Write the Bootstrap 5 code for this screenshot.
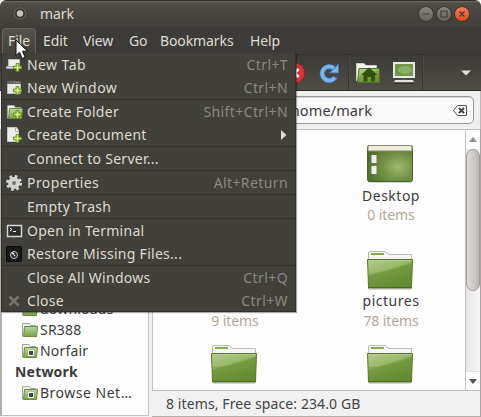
<!DOCTYPE html>
<html lang="en">
<head>
<meta charset="utf-8">
<meta name="viewport" content="width=device-width, initial-scale=1">
<title>mark</title>
<link href="https://cdn.jsdelivr.net/npm/bootstrap@5.3.0/dist/css/bootstrap.min.css" rel="stylesheet">
<style>
body{width:481px;height:417px;overflow:hidden;background:#3c3b37;font-family:"Noto Sans","Open Sans",sans-serif;font-size:14px;line-height:20px;color:#3c3c3c;letter-spacing:-.1px}
.win{width:481px;height:417px;border-radius:6px 6px 0 0;background:#f0f1f0}
.backing{background:#fff}
.titlebar{height:27px;background:linear-gradient(#2f2e2b 0,#2f2e2b 1px,#65635b 1px,#65635b 2px,#4d4b44 3px,#403f3a);color:#dfdbd2;padding:1px 11px 0 12px}
.menubar-top{height:27px;background:#3c3b37;color:#dfdbd2;padding:1px 0 0 2px}
.menubar-top span{height:26px;line-height:26px}
.menubar-top .m-file{width:34px;padding-left:5px;line-height:24px;border:1px solid #6a6257;border-bottom:0;border-radius:4px 4px 0 0;background:linear-gradient(#54524a,#42413a)}
.m-edit{margin-left:7px;width:40px}
.m-view{width:46px}
.m-go{width:31px}
.m-book{width:90px}
.toolbar{height:37px;background:linear-gradient(#3c3b37,#4f4d46);border-top:1px solid #35342f;border-bottom:1px solid #2f2e2a}
.tsep{width:1px;height:35px;background:#383732;box-shadow:1px 0 #4c4b44}
.t-reload{margin-left:12px}
.t-s1,.t-home,.t-s2{margin-left:6px}
.t-comp{margin-left:11px}
.t-arr{margin:0 10px 0 38px}
.location{height:38px;background:#efefee;padding:5px 6px 0 2px;border-right:1px solid #bdb9b6}
.entry{height:28px;background:#f8f9f8;border:1px solid #9a9896;border-radius:5px;box-shadow:inset 0 1px #d5d4d3;font-size:14.5px;letter-spacing:.1px;padding-right:6px}
.entry b{font-weight:400;margin-right:81px}
.sidebar{width:149px;height:287px;background:#fdfefd;border:1px solid #c5bfbd;border-left:2px solid #b5aeab;padding:0 0 12px 19px;letter-spacing:.2px}
.place{height:21px;gap:2px}
.p4{letter-spacing:.5px}
.p-net{margin-left:-6px}
.viewer{width:329px;border-right:1px solid #aaa3a1}
.pane{width:328px;height:262px;border:1px solid #c5bfbd;border-right:0;background:#fdfefd}
.files{width:312px;padding-left:4px;grid-template-columns:156px 156px;grid-template-rows:109px 94px 57px;display:grid}
.cell{padding-top:11px}
.cell svg{margin-left:53px}
.label{letter-spacing:.5px}
.cell .sub{color:#b2a798}
.desk .sub{margin-top:-1px}
.sbar{width:15px;border-left:1px solid #c9c2c0;background:linear-gradient(90deg,#e6e5e4,#f7f7f7)}
.sbtn{height:19px;background:#fdfefd}
.thumb{height:142px;border:1px solid #a39c99;border-radius:7px;background:linear-gradient(90deg,#dedad9,#cfcaca 55%,#bbb4b4)}
.status{height:26px;padding:0 0 0 14px;color:#444;border-bottom:1px solid #b5aeab;letter-spacing:.1px}
.appmenu{position:absolute;left:1px;top:53px;width:295px;height:259px;background:#41403a;border:1px solid #31302c;border-top:0;box-shadow:1px 1px 1px #0005;color:#dfdbd2;letter-spacing:.28px}
.mi{height:23px;padding:1px 7px 0 4px}
.mi svg{width:18px;height:18px;margin-right:3px;flex:none}
.mi .sub-arrow{width:6px;height:10px;margin-right:1px}
.mi .kb{color:#8b887f;letter-spacing:.4px}
.mi .wide{letter-spacing:.42px}
.ms{height:1px;background:#32312d}
.pointer-icon{position:absolute;left:15px;top:39px}
</style>
<script src="https://cdn.jsdelivr.net/npm/bootstrap@5.3.0/dist/js/bootstrap.bundle.min.js"></script>
</head>
<body>
<svg width="0" height="0" class="position-absolute">
<defs>
<linearGradient id="gf" x1="0" y1="0" x2=".5" y2="1"><stop offset="0" stop-color="#b6cd92"/><stop offset=".45" stop-color="#98b968"/><stop offset=".5" stop-color="#7fa34a"/><stop offset="1" stop-color="#668f33"/></linearGradient>
<linearGradient id="gs" x1="0" y1="0" x2="0" y2="1"><stop offset="0" stop-color="#c0d5a0"/><stop offset="1" stop-color="#7ba345"/></linearGradient>
<radialGradient id="gd" cx=".68" cy=".6" r=".75"><stop offset="0" stop-color="#9dbb71"/><stop offset=".4" stop-color="#77984a"/><stop offset="1" stop-color="#4b6a2c"/></radialGradient>
<linearGradient id="gb" x1="0" y1="0" x2="0" y2="1"><stop offset="0" stop-color="#8a867c"/><stop offset="1" stop-color="#66635b"/></linearGradient>
<linearGradient id="go" x1="0" y1="0" x2="0" y2="1"><stop offset="0" stop-color="#f6815a"/><stop offset="1" stop-color="#e6471b"/></linearGradient>
<symbol id="folder" viewBox="0 0 48 41"><path d="M2.500 10V3Q2.500 1.500 4 1.500H19L23 4.500H45.500V10Z" fill="#f6f7f5" stroke="#b9bcb7"/><path d="M5 4h13" stroke="#86ad4b" stroke-width="2"/><path d="M1.500 9.500H46.500L45.500 37.500H2.500Z" fill="url(#gf)" stroke="#55762e"/><path d="M2.500 10.500H45.500" stroke="#c5d8a8" opacity=".5"/><path d="M3 23Q27 22 45.500 13V37H3Z" fill="#5a8428" opacity=".25"/><path d="M2 38h44" stroke="#3f5c20" stroke-width="1.200"/><path d="M3 39.500h42" stroke="#bbb" opacity=".6"/></symbol>
<symbol id="sfolder" viewBox="0 0 17 16"><path d="M1.500 14.500V1.500H8L9.500 3.500H14.500V6" fill="#f4f5f2" stroke="#a2a59d"/><path d="M3.500 4.500H16.500L15.500 14.500H2.500Z" fill="url(#gs)" stroke="#6a8b42"/></symbol>
<symbol id="plus" viewBox="0 0 10 10"><path d="M3.500 .5h3v3h3v3h-3v3h-3v-3h-3v-3h3z" fill="#b8dc55" stroke="#5b8a17"/><path d="M2 5h6M5 2v6" stroke="#e2f39c"/></symbol>
</defs>
</svg>
<div class="backing">
<main class="win position-relative overflow-hidden">
<header class="titlebar d-flex align-items-center">
<svg width="16" height="16"><circle cx="8" cy="7.500" r="5.500" fill="#34332f" stroke="#6c6961"/><circle cx="8" cy="7.500" r="3.200" fill="#cbc2be"/></svg>
<span class="ms-2 ps-1 me-auto">mark</span>
<svg width="52" height="18"><g stroke="#35342f"><circle cx="8" cy="9" r="7.500" fill="url(#gb)"/><circle cx="26" cy="9" r="7.500" fill="url(#gb)"/><circle cx="44" cy="9" r="7.500" fill="url(#go)"/><path d="M4.500 9h7M23 6h6v6h-6zM41.500 6.500l5 5M46.500 6.500l-5 5" fill="none" stroke="#3c3b37" stroke-width="1.200"/></g></svg>
</header>
<nav class="menubar-top d-flex text-nowrap"><span class="m-file">File</span><span class="m-edit">Edit</span><span class="m-view">View</span><span class="m-go">Go</span><span class="m-book">Bookmarks</span><span class="m-help">Help</span></nav>
<div class="toolbar d-flex align-items-center justify-content-end">
<svg width="24" height="24"><circle cx="12.500" cy="12" r="10.200" fill="#d63538" stroke="#9f2025"/><path d="M8.500 8l8 8m0-8l-8 8" stroke="#fff" stroke-width="3"/></svg>
<svg width="24" height="24" class="t-reload"><path d="M17.500 16A7 7 0 1 1 15.500 7" fill="none" stroke="#3f74b5" stroke-width="5.500"/><path d="M20.500 3v9h-9z" fill="#7db4ea" stroke="#3f74b5"/><path d="M16.800 16.600A7 7 0 1 1 15.800 7.300" fill="none" stroke="#7db4ea" stroke-width="3.700"/></svg>
<div class="tsep t-s1"></div>
<svg width="26" height="24" class="t-home"><path d="M1.500 20V2.500H9L11 4.500H21.500V8" fill="#f4f5f0" stroke="#c9ccc4"/><path d="M4 7.500H24.500V21.500H2.500Z" fill="url(#gf)" stroke="#4d7322"/><path d="M14 6.500L22.500 14H20V20.500H16V16H12.500V20.500H8.500V14H6Z" fill="#35530f"/></svg>
<svg width="24" height="24" class="t-comp"><rect x="2" y="2" width="20" height="14" fill="#6f9645" stroke="#e8e8e4" stroke-width="2"/><ellipse cx="13" cy="9" rx="7" ry="4" fill="#98b776" opacity=".7"/><path d="M9 17h6v2H9z" fill="#555"/><path d="M3 19h18l1 2.500H2z" fill="#e4e4e0"/><path d="M2 22h20" stroke="#222"/></svg>
<div class="tsep t-s2"></div>
<svg width="10" height="6" class="t-arr"><path d="M0 .5h10L5 5.500z" fill="#e3dfd6"/></svg>
</div>
<div class="location"><div class="entry d-flex align-items-center justify-content-end"><b>/home/mark</b>
<svg width="14" height="11"><path d="M4.500 .5h9v10h-9L.5 5.500z" fill="#fff" stroke="#555"/><path d="M6 3l5 5m0-5L6 8" stroke="#444" stroke-width="2"/></svg></div></div>
<div class="d-flex">
<aside class="sidebar d-flex flex-column justify-content-end text-nowrap">
<div class="place d-flex align-items-center"><svg width="17" height="16"><use href="#sfolder"/></svg><span>downloads</span></div>
<div class="place d-flex align-items-center"><svg width="17" height="16"><use href="#sfolder"/></svg><span>SR388</span></div>
<div class="place d-flex align-items-center"><svg width="17" height="16"><use href="#sfolder"/><path d="M7.500 7.500h5v5h-5z" fill="#444" stroke="#fff"/></svg><span>Norfair</span></div>
<div class="place d-flex align-items-center fw-bold p-net">Network</div>
<div class="place d-flex align-items-center"><svg width="17" height="16"><use href="#sfolder"/><path d="M7.500 7.500h5v5h-5z" fill="#444" stroke="#fff"/></svg><span class="p4">Browse Net…</span></div>
</aside>
<section class="viewer ms-auto">
<div class="pane d-flex">
<div class="files overflow-hidden">
<div class="cell"></div>
<div class="cell desk text-center"><svg width="48" height="45" class="d-block"><rect x="2" y="40" width="44" height="2" fill="#aaa" opacity=".5"/><rect x="1.500" y="4.500" width="45" height="36" rx="2" fill="url(#gd)" stroke="#48602d"/><path d="M2 10V6.500Q2 4.500 3.500 4.500H44.500Q46 4.500 46 6.500V10Z" fill="#eeeedd" stroke="#8d8a68"/><path d="M5.500 14h5v8h-5zM5.500 25h5v8h-5z" fill="#eef0ec"/></svg><div class="label">Desktop</div><div class="sub">0 items</div></div>
<div class="cell text-center"><svg width="48" height="61" class="d-block"><use href="#folder" width="48" height="41"/></svg><div class="sub">9 items</div></div>
<div class="cell text-center"><svg width="48" height="41" class="d-block"><use href="#folder"/></svg><div class="label">pictures</div><div class="sub">78 items</div></div>
<div class="cell text-center"><svg width="48" height="41" class="d-block"><use href="#folder"/></svg></div>
<div class="cell text-center"><svg width="48" height="41" class="d-block"><use href="#folder"/></svg></div>
</div>
<div class="sbar d-flex flex-column ms-auto">
<div class="sbtn d-flex align-items-center justify-content-center"><svg width="8" height="5"><path d="M0 5h8L4 0z" fill="#918d8a"/></svg></div>
<div class="thumb"></div>
<div class="sbtn mt-auto border-top d-flex align-items-center justify-content-center"><svg width="8" height="5"><path d="M0 0h8L4 5z" fill="#55524f"/></svg></div>
</div>
</div>
<div class="status d-flex align-items-center">8 items, Free space: 234.0 GB</div>
</section>
</div>
<div class="appmenu text-nowrap">
<div class="mi d-flex align-items-center"><svg><path d="M2.500 3.500h11v8h-11z" fill="#eee" stroke="#bbb"/><path d="M.5 10.500h15v2H.5z" fill="#ddd" stroke="#aaa"/><use href="#plus" x="7" y="7" width="9" height="9"/></svg><span class="wide">New Tab</span><span class="kb ms-auto">Ctrl+T</span></div>
<div class="mi d-flex align-items-center"><svg><path d="M1.500 2.500h13v12h-13z" fill="#e9e9e6" stroke="#bbb"/><path d="M1 3.500h14" stroke="#666" stroke-width="3"/><path d="M8 3.500h6" stroke="#e79a44" stroke-dasharray="1 1"/><use href="#plus" x="7" y="7" width="9" height="9"/></svg><span class="wide">New Window</span><span class="kb ms-auto">Ctrl+N</span></div>
<div class="ms"></div>
<div class="mi d-flex align-items-center"><svg><use href="#sfolder" x="0" y="1" width="17" height="16"/><use href="#plus" x="7" y="7" width="9" height="9"/></svg><span>Create Folder</span><span class="kb ms-auto">Shift+Ctrl+N</span></div>
<div class="mi d-flex align-items-center"><svg><path d="M1.500 1.500h9l2 3v11h-11z" fill="#ecedea" stroke="#c8c8c4"/><path d="M9.500 1.500v4h3" fill="#fff" stroke="#aaa"/><use href="#plus" x="7" y="8" width="9" height="9"/></svg><span>Create Document</span><svg class="ms-auto sub-arrow" viewBox="0 0 6 10"><path d="M0 0l5.500 5L0 10z" fill="#dfdbd2"/></svg></div>
<div class="ms"></div>
<div class="mi d-flex align-items-center"><svg></svg><span>Connect to Server...</span></div>
<div class="ms"></div>
<div class="mi d-flex align-items-center"><svg><circle cx="8" cy="9" r="6.500" fill="none" stroke="#d8d8d4" stroke-width="3" stroke-dasharray="2.550 2.550"/><circle cx="8" cy="9" r="4" fill="#777" stroke="#d2d2ce" stroke-width="4"/></svg><span class="wide">Properties</span><span class="kb ms-auto">Alt+Return</span></div>
<div class="ms"></div>
<div class="mi d-flex align-items-center"><svg></svg><span>Empty Trash</span></div>
<div class="ms"></div>
<div class="mi d-flex align-items-center"><svg><path d="M1.500 3.500h14v11h-14z" fill="#2c2d2c" stroke="#d5d5d2" stroke-width="1.500"/><path d="M4 6l2 1.500-2 1.500M7 9.500h3" fill="none" stroke="#fff"/></svg><span>Open in Terminal</span></div>
<div class="mi d-flex align-items-center"><svg><rect x=".5" y="1.500" width="15" height="15" rx="1" fill="#171817" stroke="#090909"/><circle cx="8" cy="10" r="3.500" fill="#222" stroke="#ccc"/><path d="M8 10l1 1M6 7.500l2 2" stroke="#fff" stroke-width="1.500"/></svg><span>Restore Missing Files...</span></div>
<div class="ms"></div>
<div class="mi d-flex align-items-center"><svg></svg><span>Close All Windows</span><span class="kb ms-auto">Ctrl+Q</span></div>
<div class="mi d-flex align-items-center"><svg><path d="M3.500 4.500l9 9m0-9l-9 9" stroke="#77746d" stroke-width="2.500"/></svg><span>Close</span><span class="kb ms-auto">Ctrl+W</span></div>
</div>
<svg class="pointer-icon" width="14" height="21"><path d="M1 1v15.500l3.500-3.300 2.600 6.300 3-1.300-2.600-6h5z" fill="#fff" stroke="#111"/></svg>
</main>
</div>
</body>
</html>
